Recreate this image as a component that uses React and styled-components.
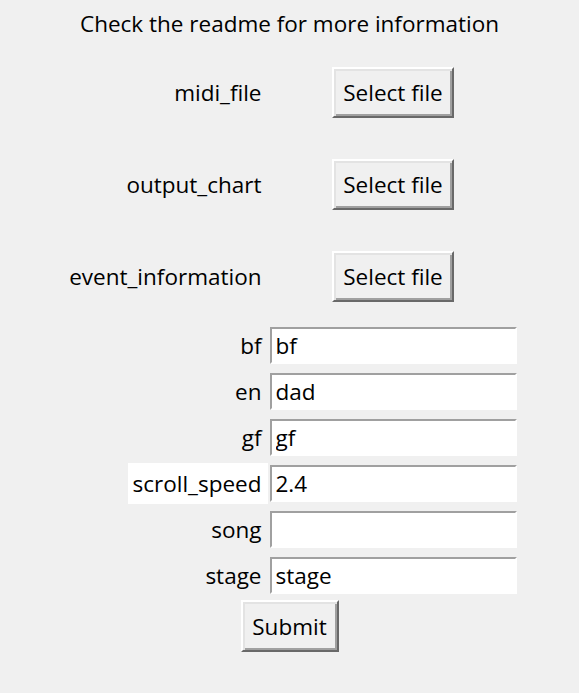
import React from 'react';
import styled, { createGlobalStyle } from 'styled-components';

const GlobalStyle = createGlobalStyle`
  html, body {
    margin: 0;
    padding: 0;
    background: #f0f0f0;
  }
  body {
    font-family: "Open Sans", "Noto Sans", sans-serif;
    font-size: 22.5px;
    color: #000;
  }
`;

const Form = styled.div`
  display: grid;
  grid-template-columns: 207px 251px;
  justify-content: center;
  width: 579px;
  min-height: 693px;
  align-content: start;
`;

const Title = styled.div`
  grid-column: 1 / span 2;
  height: 46px;
  display: flex;
  align-items: center;
  justify-content: center;
  white-space: nowrap;
`;

const Label = styled.div`
  display: flex;
  align-items: center;
  justify-content: flex-end;
  height: ${p => p.$h}px;
  white-space: nowrap;
`;

const LabelText = styled.span`
  padding: 0 6px 0 5px;
  height: 41px;
  line-height: 41px;
  background: ${p => (p.$focus ? '#ffffff' : 'transparent')};
`;

const Cell = styled.div`
  display: flex;
  align-items: center;
  justify-content: ${p => (p.$center ? 'center' : 'flex-start')};
  height: ${p => p.$h}px;
`;

const TkButton = styled.button`
  box-sizing: border-box;
  width: ${p => p.$w}px;
  height: ${p => p.$hh}px;
  padding: 0;
  background: #f0f0f0;
  border: 2px solid;
  border-color: #ffffff #696969 #696969 #ffffff;
  box-shadow: inset 2px 2px #e3e3e3, inset -2px -2px #a0a0a0;
  font-family: "Open Sans", "Noto Sans", sans-serif;
  font-size: 22.5px;
  color: #000;
  cursor: pointer;
`;

const Entry = styled.input`
  box-sizing: border-box;
  width: 247px;
  height: 37px;
  margin-left: 2px;
  padding: 0 4px;
  background: #fff;
  border: 2px solid;
  border-color: #a0a0a0 #ffffff #ffffff #a0a0a0;
  font-family: "Open Sans", "Noto Sans", sans-serif;
  font-size: 22.5px;
  color: #000;
  outline: none;
`;

const SubmitRow = styled.div`
  grid-column: 1 / span 2;
  display: flex;
  justify-content: center;
  align-items: center;
  height: 56px;
`;

const fileFields = ['midi_file', 'output_chart', 'event_information'];

const textFields = [
  { name: 'bf', value: 'bf' },
  { name: 'en', value: 'dad' },
  { name: 'gf', value: 'gf' },
  { name: 'scroll_speed', value: '2.4', focus: true },
  { name: 'song', value: '' },
  { name: 'stage', value: 'stage' },
];

export default function App() {
  return (
    <>
      <GlobalStyle />
      <Form>
        <Title>Check the readme for more information</Title>

        {fileFields.map(name => (
          <React.Fragment key={name}>
            <Label $h={92}>
              <LabelText>{name}</LabelText>
            </Label>
            <Cell $h={92} $center>
              <TkButton type="button" $w={122} $hh={51}>Select file</TkButton>
            </Cell>
          </React.Fragment>
        ))}

        {textFields.map(f => (
          <React.Fragment key={f.name}>
            <Label $h={46}>
              <LabelText $focus={f.focus}>{f.name}</LabelText>
            </Label>
            <Cell $h={46}>
              <Entry defaultValue={f.value} />
            </Cell>
          </React.Fragment>
        ))}

        <SubmitRow>
          <TkButton type="button" $w={98} $hh={52}>Submit</TkButton>
        </SubmitRow>
      </Form>
    </>
  );
}
